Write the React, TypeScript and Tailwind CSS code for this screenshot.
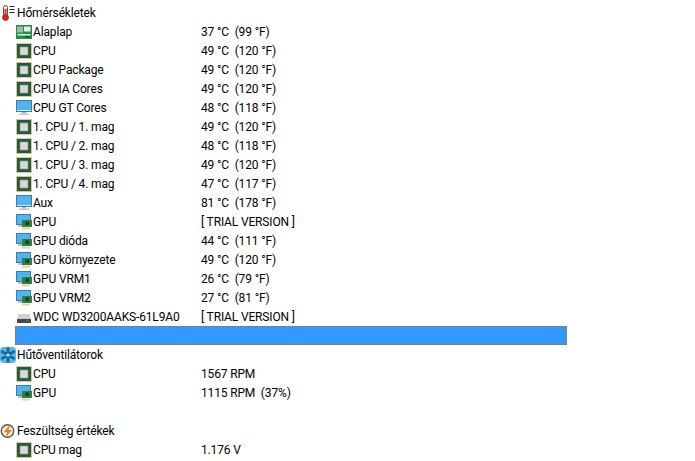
const font = "font-['Roboto','Open_Sans',sans-serif]";

function Thermometer() {
  return (
    <svg width="16" height="16" viewBox="0 0 16 16" className="shrink-0">
      <rect x="3.5" y="0.5" width="4" height="11" rx="2" fill="#fbeeee" stroke="#8a3a30" />
      <rect x="4.5" y="4" width="2" height="8" fill="#e0301e" />
      <circle cx="5.5" cy="12.5" r="3" fill="#d8281a" stroke="#8a2015" strokeWidth="0.7" />
      <path d="M9.5 1.5h5M9.5 4.5h5M9.5 7.5h5" stroke="#222" strokeWidth="1" />
    </svg>
  );
}

function Fan() {
  return (
    <svg width="16" height="16" viewBox="0 0 16 16" className="shrink-0">
      <rect x="0" y="0" width="16" height="16" rx="3.5" fill="#5eb3e0" />
      <path d="M8 1.5v13M2.4 4.7l11.2 6.6M13.6 4.7L2.4 11.3" stroke="#0e6aa0" strokeWidth="2.8" strokeLinecap="round" />
      <circle cx="8" cy="8" r="1.5" fill="#dff1fb" />
    </svg>
  );
}

function Voltage() {
  return (
    <svg width="16" height="16" viewBox="0 0 16 16" className="shrink-0">
      <circle cx="7.5" cy="8" r="6.2" fill="#f6f1ea" stroke="#5f5245" strokeWidth="1.4" />
      <path d="M10.5 1L3.8 9h3.4L5 15l7-8H8.4z" fill="#ee7d12" />
    </svg>
  );
}

function Board() {
  return (
    <svg width="16" height="16" viewBox="0 0 16 16" className="shrink-0">
      <rect x="0" y="1" width="16" height="14" fill="#2c8a4c" />
      <path d="M2 2.5v6M4 2.5v6M6 2.5v6" stroke="#e2f2e4" strokeWidth="1.1" />
      <rect x="8" y="2.5" width="6.5" height="5" fill="#e2f2e4" />
      <rect x="1.5" y="10" width="13" height="1.5" fill="#e2f2e4" />
      <rect x="9" y="12" width="5" height="1.5" fill="#14502c" />
    </svg>
  );
}

function Chip() {
  return (
    <svg width="16" height="16" viewBox="0 0 16 16" className="shrink-0">
      <rect x="0.5" y="0.5" width="15" height="15" fill="none" stroke="#c08a3a" strokeDasharray="1 1" />
      <rect x="1" y="1" width="14" height="14" fill="#27583e" />
      <rect x="4" y="4" width="8" height="8" fill="#d8d8d4" stroke="#8f9f92" strokeWidth="0.6" />
    </svg>
  );
}

function Monitor() {
  return (
    <svg width="16" height="16" viewBox="0 0 16 16" className="shrink-0">
      <rect x="0.5" y="0.5" width="15" height="11" fill="#52b4ec" stroke="#3a7dab" />
      <path d="M1 10.5h14" stroke="#cfe9f8" />
      <rect x="6" y="12" width="4" height="1.5" fill="#a8b4bd" />
      <rect x="3" y="13.5" width="10" height="1.5" fill="#bcc6cc" />
    </svg>
  );
}

function Gpu() {
  return (
    <svg width="16" height="16" viewBox="0 0 16 16" className="shrink-0">
      <rect x="0.5" y="0.5" width="14" height="10" fill="#52b4ec" stroke="#3a7dab" />
      <rect x="2" y="11" width="7" height="2" fill="#bcc6cc" />
      <rect x="6" y="6" width="10" height="7" fill="#2f7f4a" />
      <rect x="9.5" y="7.5" width="3.5" height="3.5" fill="#16401f" />
      <path d="M7 13.5v2M9 13.5v2M11 13.5v2M13 13.5v2" stroke="#d8a030" strokeWidth="1" />
    </svg>
  );
}

function Disk() {
  return (
    <svg width="16" height="16" viewBox="0 0 16 16" className="shrink-0">
      <path d="M2.5 5h11L15 10H1z" fill="#d2d2d2" />
      <rect x="1" y="10" width="14" height="4" rx="0.5" fill="#454545" />
      <rect x="10.5" y="11.5" width="2" height="1" fill="#35d04a" />
    </svg>
  );
}

type Sensor = { icon: React.ReactNode; label: string; value: string };

const temps: Sensor[] = [
  { icon: <Board />, label: "Alaplap", value: "37 °C  (99 °F)" },
  { icon: <Chip />, label: "CPU", value: "49 °C  (120 °F)" },
  { icon: <Chip />, label: "CPU Package", value: "49 °C  (120 °F)" },
  { icon: <Chip />, label: "CPU IA Cores", value: "49 °C  (120 °F)" },
  { icon: <Monitor />, label: "CPU GT Cores", value: "48 °C  (118 °F)" },
  { icon: <Chip />, label: "1. CPU / 1. mag", value: "49 °C  (120 °F)" },
  { icon: <Chip />, label: "1. CPU / 2. mag", value: "48 °C  (118 °F)" },
  { icon: <Chip />, label: "1. CPU / 3. mag", value: "49 °C  (120 °F)" },
  { icon: <Chip />, label: "1. CPU / 4. mag", value: "47 °C  (117 °F)" },
  { icon: <Monitor />, label: "Aux", value: "81 °C  (178 °F)" },
  { icon: <Gpu />, label: "GPU", value: "[ TRIAL VERSION ]" },
  { icon: <Gpu />, label: "GPU dióda", value: "44 °C  (111 °F)" },
  { icon: <Gpu />, label: "GPU környezete", value: "49 °C  (120 °F)" },
  { icon: <Gpu />, label: "GPU VRM1", value: "26 °C  (79 °F)" },
  { icon: <Gpu />, label: "GPU VRM2", value: "27 °C  (81 °F)" },
  { icon: <Disk />, label: "WDC WD3200AAKS-61L9A0", value: "[ TRIAL VERSION ]" },
];

function Heading({ icon, label }: { icon: React.ReactNode; label: string }) {
  return (
    <div className="flex h-[19px] items-center gap-px">
      {icon}
      <span>{label}</span>
    </div>
  );
}

function Row({ icon, label, value }: Sensor) {
  return (
    <div className="flex h-[19px] items-center pl-4">
      {icon}
      <span className="ml-[1px] w-[168px] shrink-0 whitespace-nowrap">{label}</span>
      <span className="whitespace-pre">{value}</span>
    </div>
  );
}

export default function App() {
  return (
    <div className={`${font} h-[461px] w-[695px] overflow-hidden bg-white pt-[3px] text-xs tracking-[-0.15px] text-black`}>
      <Heading icon={<Thermometer />} label="Hőmérsékletek" />
      {temps.map((s) => (
        <Row key={s.label} {...s} />
      ))}
      <div className="ml-[15px] h-[19px] w-[552px] border border-dotted border-[#c8660a] bg-[#3399ff]" />
      <Heading icon={<Fan />} label="Hűtőventilátorok" />
      <Row icon={<Chip />} label="CPU" value="1567 RPM" />
      <Row icon={<Gpu />} label="GPU" value="1115 RPM  (37%)" />
      <div className="h-[19px]" />
      <Heading icon={<Voltage />} label="Feszültség értékek" />
      <Row icon={<Chip />} label="CPU mag" value="1.176 V" />
    </div>
  );
}
